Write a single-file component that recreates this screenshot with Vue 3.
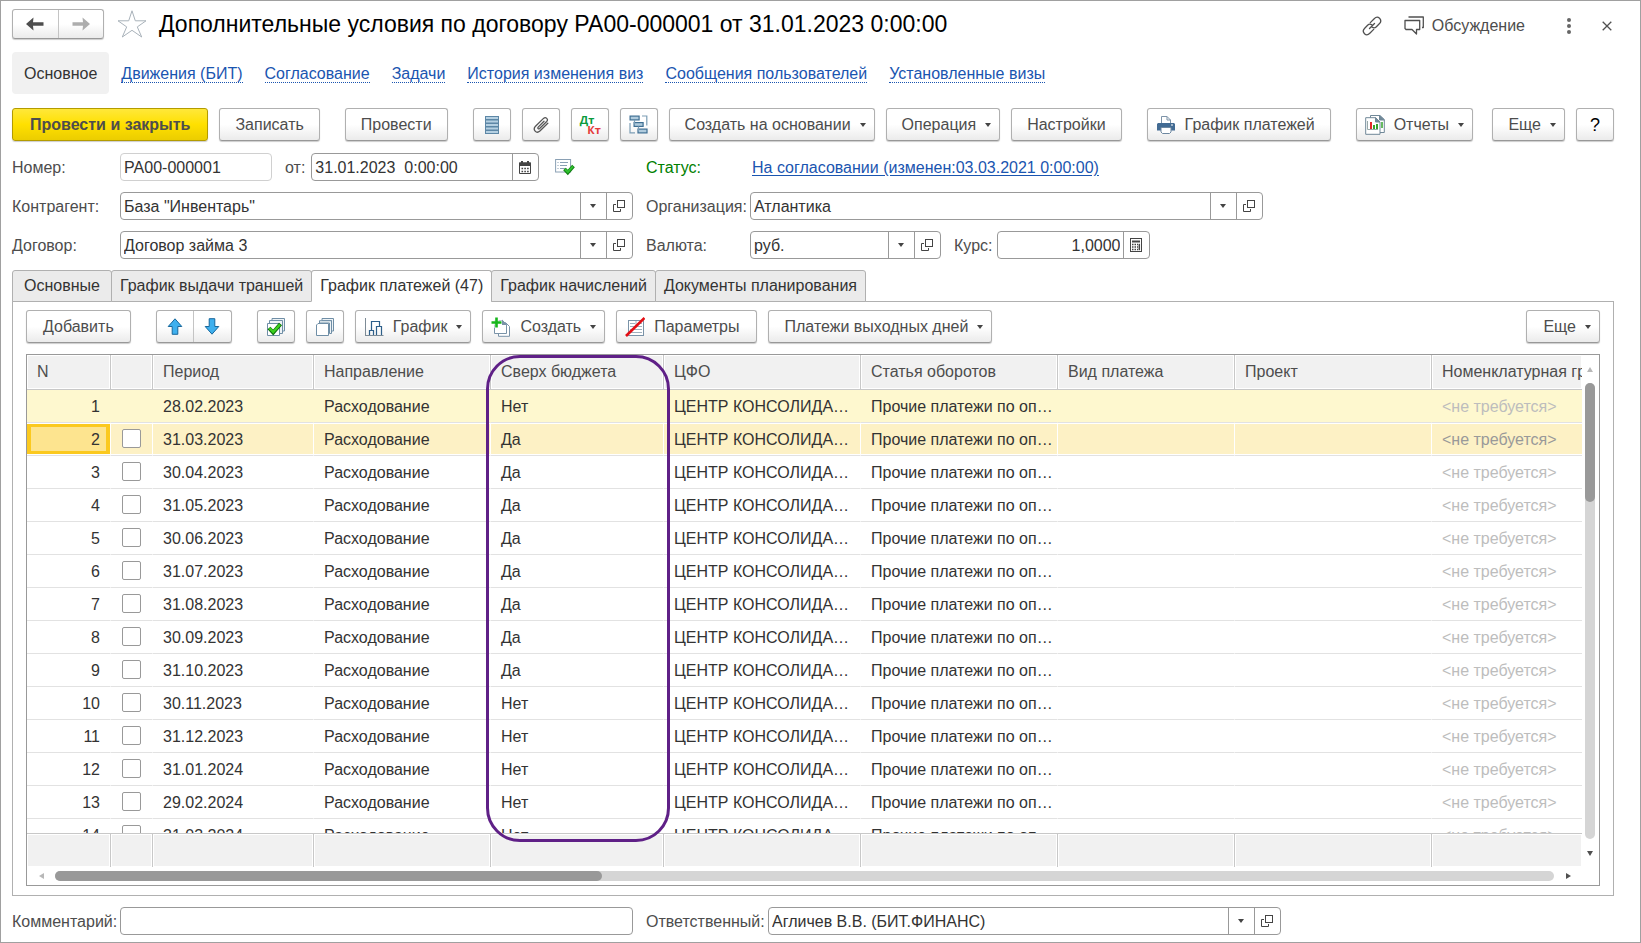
<script setup>
import { ref } from 'vue'

const links = ['Движения (БИТ)', 'Согласование', 'Задачи', 'История изменения виз', 'Сообщения пользователей', 'Установленные визы']
const tabs = ['Основные', 'График выдачи траншей', 'График платежей (47)', 'График начислений', 'Документы планирования']
const activeTab = ref(2)

const columns = [
  { key: 'n', title: 'N' },
  { key: 'mark', title: '' },
  { key: 'period', title: 'Период' },
  { key: 'direction', title: 'Направление' },
  { key: 'over', title: 'Сверх бюджета' },
  { key: 'cfo', title: 'ЦФО' },
  { key: 'article', title: 'Статья оборотов' },
  { key: 'kind', title: 'Вид платежа' },
  { key: 'project', title: 'Проект' },
  { key: 'group', title: 'Номенклатурная группа' },
]

const periods = [
  ['28.02.2023', 'Нет'], ['31.03.2023', 'Да'], ['30.04.2023', 'Да'], ['31.05.2023', 'Да'],
  ['30.06.2023', 'Да'], ['31.07.2023', 'Да'], ['31.08.2023', 'Да'], ['30.09.2023', 'Да'],
  ['31.10.2023', 'Да'], ['30.11.2023', 'Нет'], ['31.12.2023', 'Нет'], ['31.01.2024', 'Нет'],
  ['29.02.2024', 'Нет'], ['31.03.2024', 'Нет'],
]
const rows = periods.map(([period, over], i) => ({ n: i + 1, period, over }))

const number = ref('РА00-000001')
const date = ref('31.01.2023  0:00:00')
const partner = ref('База "Инвентарь"')
const contract = ref('Договор займа 3')
const organization = ref('Атлантика')
const currency = ref('руб.')
const rate = ref('1,0000')
const comment = ref('')
const responsible = ref('Агличев В.В. (БИТ.ФИНАНС)')
</script>

<template>
  <main class="window">
    <header class="title-row">
      <div class="pair history">
        <button type="button" aria-label="Назад">
          <svg width="18" height="14" viewBox="0 0 18 14"><path d="M0 7 7.500 .5 7 5.300H17.500V8.700H7L7.500 13.500Z" fill="#4d4d4d" /></svg>
        </button>
        <button type="button" aria-label="Вперед">
          <svg width="18" height="14" viewBox="0 0 18 14"><path d="M18 7 10.500 .5 11 5.300H.5V8.700H11L10.500 13.500Z" fill="#adadad" /></svg>
        </button>
      </div>
      <button type="button" class="plain star" aria-label="Избранное">
        <svg width="30" height="30" viewBox="0 0 30 30"><path d="M15 1.800 18.300 11.800H29L20.300 17.900 24.700 28 15 21.300 5.300 28 9.700 17.900 1 11.800H11.700Z" fill="#fff" stroke="#a9b2ba" stroke-width="1" /></svg>
      </button>
      <h1>Дополнительные условия по договору РА00-000001 от 31.01.2023 0:00:00</h1>
      <div class="window-tools">
        <button type="button" class="plain" aria-label="Ссылка">
          <svg width="20" height="20" viewBox="0 0 20 20" fill="none" stroke="#505050" stroke-width="1.300" stroke-linecap="round"><path d="M8.300 6.600 12.200 2.700C13.700 1.200 15.700 .5 17.500 2.300 19.400 4.200 18.800 6.300 17.300 7.800L14.400 10.700C13.300 11.800 11.500 12 10.200 11.200M11.700 13.400 7.800 17.300C6.300 18.800 4.300 19.500 2.500 17.700 .6 15.800 1.200 13.700 2.700 12.200L5.600 9.300C6.700 8.200 8.500 8 9.800 8.800M7.500 12.500 12.500 7.500" /></svg>
        </button>
        <button type="button" class="plain discuss">
          <svg width="20" height="20" viewBox="0 0 20 20" fill="none" stroke="#505050" stroke-width="1.300"><path d="M4.500 1H19.300V11.500H18M1 4.500H15.700V13.500H12.500V18L8 13.500H2L1 12.500Z" stroke-linejoin="round" /></svg>
          <span>Обсуждение</span>
        </button>
        <button type="button" class="plain dots" aria-label="Меню">
          <svg width="4" height="16" viewBox="0 0 4 16" fill="#666"><circle cx="2" cy="2" r="2" /><circle cx="2" cy="8" r="2" /><circle cx="2" cy="14" r="2" /></svg>
        </button>
        <button type="button" class="plain close" aria-label="Закрыть">
          <svg width="10" height="10" viewBox="0 0 10 10" stroke="#505050" stroke-width="1.300"><path d="M.7 .7 9.300 9.300M9.300 .7 .7 9.300" /></svg>
        </button>
      </div>
    </header>

    <nav class="sections">
      <span class="current">Основное</span>
      <a v-for="l in links" :key="l" href="#">{{ l }}</a>
    </nav>

    <div class="toolbar commands">
      <button type="button" class="btn primary">Провести и закрыть</button>
      <button type="button" class="btn">Записать</button>
      <button type="button" class="btn apart">Провести</button>
      <button type="button" class="btn square apart" aria-label="Регистр">
        <svg width="14" height="20" viewBox="0 0 14 20">
          <g fill="#b5d0e2" stroke="#5d87a6" stroke-width="1"><rect x=".5" y="1.500" width="13" height="3" /><rect x=".5" y="5" width="13" height="3" /><rect x=".5" y="8.500" width="13" height="3" /><rect x=".5" y="12" width="13" height="3" /><rect x=".5" y="15.500" width="13" height="3" /></g>
        </svg>
      </button>
      <button type="button" class="btn square" aria-label="Файлы">
        <svg width="18" height="18" viewBox="0 0 18 18" fill="none" stroke="#555" stroke-width="1.300" stroke-linecap="round"><path d="M12 5.300 6.200 11.100C5.200 12.300 6.500 13.500 7.600 12.500L14.700 5.500C16.700 3.300 13.800 .3 11.500 2.400L3.500 10.300C.3 13.600 4.300 18.200 7.900 15L15.800 7.200" /></svg>
      </button>
      <button type="button" class="btn square dtkt" aria-label="Движения Дт Кт"><span class="dt">Дт</span><span class="kt">Кт</span></button>
      <button type="button" class="btn square" aria-label="Структура">
        <svg width="19" height="19" viewBox="0 0 19 19">
          <g fill="#b0cbdd" stroke="#3f6f93" stroke-width="1.200"><rect x="1.100" y="1.100" width="9" height="3.800" /><rect x="5.100" y="7.600" width="9" height="3.800" /><rect x="9" y="14.100" width="9" height="3.800" /></g>
          <path d="M13 1H17.800V10.500M1 8V17.800H6M5.500 5V9.500M9.500 11.500V16" fill="none" stroke="#7c9db5" stroke-width="1.200" />
        </svg>
      </button>
      <button type="button" class="btn drop">Создать на основании<i class="caret"></i></button>
      <button type="button" class="btn drop">Операция<i class="caret"></i></button>
      <button type="button" class="btn">Настройки</button>
      <button type="button" class="btn apart with-icon">
        <svg width="20" height="20" viewBox="0 0 20 20">
          <path d="M5.500 8V1.500H11L14.500 5V8" fill="#fff" stroke="#7d93a8" /><path d="M11 1.500V5H14.500" fill="none" stroke="#7d93a8" />
          <path d="M2 8H18L19 9V15.500H1V9Z" fill="#426b93" /><rect x="15" y="9.500" width="2" height="1" fill="#fff" />
          <path d="M5 12.500H15V17L13.500 18.500H6.500L5 17Z" fill="#fff" stroke="#6e88a0" />
        </svg>
        <span>График платежей</span>
      </button>
      <button type="button" class="btn apart with-icon drop">
        <svg width="20" height="20" viewBox="0 0 20 20">
          <path d="M5.500 .5H15L19.300 4.500V17.500H5.500Z" fill="#fff" stroke="#708898" /><path d="M14.500 .5V5H19.300Z" fill="#708898" stroke="#708898" /><path d="M17 7V13" stroke="#35a52d" stroke-width="1.500" />
          <path d="M.7 2.700H10.500L15 7V19.300H.7Z" fill="#fff" stroke="#708898" /><path d="M10.500 2.700V7H15Z" fill="#708898" stroke="#708898" />
          <path d="M2.500 6V14.500H13" fill="none" stroke="#9aa" /><rect x="5" y="7" width="2" height="7" fill="#e32a2a" /><rect x="8" y="10" width="2" height="4" fill="#35a52d" /><rect x="11" y="9" width="2" height="5" fill="#35a52d" />
        </svg>
        <span>Отчеты</span><i class="caret"></i>
      </button>
      <button type="button" class="btn drop to-end">Еще<i class="caret"></i></button>
      <button type="button" class="btn square help">?</button>
    </div>

    <form class="form" @submit.prevent>
      <div class="row">
        <div class="left">
          <label class="lbl" for="number">Номер:</label>
          <div class="field muted number"><input id="number" v-model="number" type="text" readonly /></div>
          <label class="from" for="date">от:</label>
          <div class="field date">
            <input id="date" v-model="date" type="text" />
            <button type="button" aria-label="Календарь">
              <svg width="12" height="13" viewBox="0 0 12 13"><path d="M.5 2H11.500V12.500H.5Z" fill="#fff" stroke="#444" /><path d="M0 1.500H12V5H0Z" fill="#444" /><path d="M3 0V3M9 0V3" stroke="#444" stroke-width="2" /><path d="M2.500 7.500H10M2.500 10.500H10" stroke="#444" stroke-width="1.600" stroke-dasharray="1.600 1.200" /></svg>
            </button>
          </div>
          <svg class="posted" width="20" height="18" viewBox="0 0 20 18"><rect x=".6" y="1.500" width="15" height="12.500" fill="#fff" stroke="#8aa0b4" /><path d="M5 4.500H13M5 7.500H12M5 10.500H10M2.500 4.500H3.500M2.500 7.500H3.500M2.500 10.500H3.500" stroke="#8aa0b4" /><path d="M9.500 11 12.800 14.500 18.500 8" fill="none" stroke="#118011" stroke-width="3.600" /><path d="M10 11.200 12.800 14 18 8.300" fill="none" stroke="#2fc12f" stroke-width="2" /></svg>
        </div>
        <span class="lbl2 status">Статус:</span>
        <a class="state" href="#">На согласовании (изменен:03.03.2021 0:00:00)</a>
      </div>

      <div class="row">
        <div class="left">
          <label class="lbl" for="partner">Контрагент:</label>
          <div class="field wide">
            <input id="partner" v-model="partner" type="text" role="combobox" aria-expanded="false" />
            <button type="button" aria-label="Выбрать контрагента"><i class="caret"></i></button>
            <button type="button" aria-label="Открыть контрагента"><svg width="12" height="12" viewBox="0 0 12 12" fill="none" stroke="#444"><rect x="4.500" y=".5" width="7" height="7" /><path d="M3 4.500H.5V11.500H7.500V9" /></svg></button>
          </div>
        </div>
        <label class="lbl2" for="organization">Организация:</label>
        <div class="field wide">
          <input id="organization" v-model="organization" type="text" role="combobox" aria-expanded="false" />
          <button type="button" aria-label="Выбрать организацию"><i class="caret"></i></button>
          <button type="button" aria-label="Открыть организацию"><svg width="12" height="12" viewBox="0 0 12 12" fill="none" stroke="#444"><rect x="4.500" y=".5" width="7" height="7" /><path d="M3 4.500H.5V11.500H7.500V9" /></svg></button>
        </div>
      </div>

      <div class="row">
        <div class="left">
          <label class="lbl" for="contract">Договор:</label>
          <div class="field wide">
            <input id="contract" v-model="contract" type="text" role="combobox" aria-expanded="false" />
            <button type="button" aria-label="Выбрать договор"><i class="caret"></i></button>
            <button type="button" aria-label="Открыть договор"><svg width="12" height="12" viewBox="0 0 12 12" fill="none" stroke="#444"><rect x="4.500" y=".5" width="7" height="7" /><path d="M3 4.500H.5V11.500H7.500V9" /></svg></button>
          </div>
        </div>
        <label class="lbl2" for="currency">Валюта:</label>
        <div class="field currency">
          <input id="currency" v-model="currency" type="text" role="combobox" aria-expanded="false" />
          <button type="button" aria-label="Выбрать валюту"><i class="caret"></i></button>
          <button type="button" aria-label="Открыть валюту"><svg width="12" height="12" viewBox="0 0 12 12" fill="none" stroke="#444"><rect x="4.500" y=".5" width="7" height="7" /><path d="M3 4.500H.5V11.500H7.500V9" /></svg></button>
        </div>
        <label class="rate-label" for="rate">Курс:</label>
        <div class="field rate">
          <input id="rate" v-model="rate" type="text" />
          <button type="button" aria-label="Калькулятор">
            <svg width="12" height="14" viewBox="0 0 12 14"><rect x=".5" y=".5" width="11" height="13" fill="#fff" stroke="#444" /><path d="M2 3.500H10" stroke="#444" stroke-width="2" /><path d="M2 6.500H8M2 9H8M2 11.500H8" stroke="#444" stroke-width="1.500" stroke-dasharray="1.500 1" /><path d="M9.300 5.800V12.200" stroke="#444" stroke-width="1.500" /></svg>
          </button>
        </div>
      </div>
    </form>

    <div class="tabs" role="tablist">
      <button v-for="(t, i) in tabs" :key="t" type="button" role="tab" :aria-selected="i === activeTab" :class="{ active: i === activeTab }" @click="activeTab = i">{{ t }}</button>
    </div>

    <section class="panel">
      <div class="toolbar">
        <button type="button" class="btn">Добавить</button>
        <div class="pair move apart">
          <button type="button" aria-label="Вверх"><svg width="16" height="17" viewBox="0 0 16 17"><path d="M8 .8 14.800 8.500H10.800V16.300H5.200V8.500H1.200Z" fill="#3fb0ee" stroke="#17679c" /></svg></button>
          <button type="button" aria-label="Вниз"><svg width="16" height="17" viewBox="0 0 16 17"><path d="M8 16.200 14.800 8.500H10.800V.7H5.200V8.500H1.200Z" fill="#3fb0ee" stroke="#17679c" /></svg></button>
        </div>
        <button type="button" class="btn square apart" aria-label="Отметить все">
          <svg width="20" height="20" viewBox="0 0 20 20"><g fill="#eef3f6" stroke="#6f8ea6"><path d="M6 1.500H18.500V14H6Z" /><path d="M3.500 3.500H16.500V16.500H3.500Z" /><path d="M1.500 6.500H13.500V18.500H1.500Z" fill="#fff" /></g><path d="M3 11 7.200 15.500 14.500 7" fill="none" stroke="#0c6f0c" stroke-width="4" /><path d="M3.500 11.200 7.200 15 14 7.500" fill="none" stroke="#3dd01e" stroke-width="2.400" /></svg>
        </button>
        <button type="button" class="btn square" aria-label="Снять отметки">
          <svg width="20" height="20" viewBox="0 0 20 20"><g fill="#eef3f6" stroke="#6f8ea6"><path d="M7 1.500H18.500V14L16.500 14V3.500H7Z" /><path d="M4.500 3.700H16.500V16.500H14.500V6H4.500Z" /><path d="M3 6.500H13.500V18.500H1.500V8Z" fill="#fff" /></g></svg>
        </button>
        <button type="button" class="btn with-icon drop">
          <svg width="20" height="20" viewBox="0 0 20 20" fill="none"><path d="M1.500 1V18.500M1 18.500H19.500" stroke="#7d8b96" /><path d="M5.500 18V13.500H9.500V18M7.500 13.500V4.500H15.500V9.500M12.500 18V9.500H17.500V18" stroke="#2d5f8a" stroke-width="1.200" /></svg>
          <span>График</span><i class="caret"></i>
        </button>
        <button type="button" class="btn with-icon drop">
          <svg width="20" height="20" viewBox="0 0 20 20"><path d="M7.500 5.500H14.500L18.500 9.500V19.300H7.500Z" fill="#fff" stroke="#7a93a8" /><path d="M3.500 3.500H11.500L15.500 7.500V16.500H3.500Z" fill="#fff" stroke="#7a93a8" /><path d="M11 2.500V8H16Z" fill="#7a93a8" /><path d="M5.500 0V11M0 5.500H11" stroke="#fff" stroke-width="4" /><path d="M5.500 .5V10.500M.5 5.500H10.500" stroke="#17b51c" stroke-width="2.600" /></svg>
          <span>Создать</span><i class="caret"></i>
        </button>
        <button type="button" class="btn with-icon">
          <svg width="20" height="20" viewBox="0 0 20 20"><rect x="3.500" y="3.500" width="15" height="15" fill="#fff" stroke="#7a93a8" /><path d="M5 6.500H10M12 6.500H17M5 9.500H10M12 9.500H17M5 12.500H17M5 15.500H17M11 4V11" stroke="#9fb0bd" /><path d="M1 19 19.500 1" stroke="#e30e14" stroke-width="2.600" /></svg>
          <span>Параметры</span>
        </button>
        <button type="button" class="btn drop">Платежи выходных дней<i class="caret"></i></button>
        <button type="button" class="btn drop to-end">Еще<i class="caret"></i></button>
      </div>

      <div class="grid-frame">
        <div class="viewport">
          <div class="clip">
            <table>
              <colgroup><col v-for="c in columns" :key="c.key" :class="'c-' + c.key" /></colgroup>
              <thead>
                <tr><th v-for="c in columns" :key="c.key" scope="col">{{ c.title }}</th></tr>
              </thead>
              <tbody>
                <tr v-for="r in rows" :key="r.n" :class="{ first: r.n === 1, selected: r.n === 2 }">
                  <td class="num">{{ r.n }}</td>
                  <td class="mark"><input v-if="r.n > 1" type="checkbox" :aria-label="'Строка ' + r.n" /></td>
                  <td>{{ r.period }}</td>
                  <td>Расходование</td>
                  <td>{{ r.over }}</td>
                  <td>ЦЕНТР КОНСОЛИДА…</td>
                  <td>Прочие платежи по оп…</td>
                  <td></td>
                  <td></td>
                  <td class="none">&lt;не требуется&gt;</td>
                </tr>
              </tbody>
            </table>
          </div>
          <div class="totals"><span v-for="c in columns" :key="c.key" :class="'c-' + c.key"></span></div>
          <div class="highlight"></div>
        </div>
        <div class="scroll vertical">
          <button type="button" class="plain" aria-label="Прокрутить вверх"><svg width="6" height="5" viewBox="0 0 6 5"><path d="M3 0 6 5H0Z" fill="#b8b8b8" /></svg></button>
          <div class="track"><div class="thumb"></div></div>
          <button type="button" class="plain" aria-label="Прокрутить вниз"><svg width="6" height="5" viewBox="0 0 6 5"><path d="M3 5 6 0H0Z" fill="#505050" /></svg></button>
        </div>
        <div class="scroll horizontal">
          <button type="button" class="plain" aria-label="Прокрутить влево"><svg width="5" height="6" viewBox="0 0 5 6"><path d="M0 3 5 0V6Z" fill="#b8b8b8" /></svg></button>
          <div class="track"><div class="thumb"></div></div>
          <button type="button" class="plain" aria-label="Прокрутить вправо"><svg width="5" height="6" viewBox="0 0 5 6"><path d="M5 3 0 0V6Z" fill="#505050" /></svg></button>
        </div>
      </div>
    </section>

    <footer class="row bottom">
      <div class="left">
        <label class="lbl" for="comment">Комментарий:</label>
        <div class="field wide"><input id="comment" v-model="comment" type="text" /></div>
      </div>
      <label class="lbl2 long" for="responsible">Ответственный:</label>
      <div class="field wide">
        <input id="responsible" v-model="responsible" type="text" role="combobox" aria-expanded="false" />
        <button type="button" aria-label="Выбрать ответственного"><i class="caret"></i></button>
        <button type="button" aria-label="Открыть ответственного"><svg width="12" height="12" viewBox="0 0 12 12" fill="none" stroke="#444"><rect x="4.500" y=".5" width="7" height="7" /><path d="M3 4.500H.5V11.500H7.500V9" /></svg></button>
      </div>
    </footer>
  </main>
</template>

<style>
body {
  margin: 0;
  background: #fff;
}
</style>

<style scoped>
* {
  box-sizing: border-box;
}
.window {
  display: flex;
  flex-direction: column;
  height: 100vh;
  min-height: 600px;
  padding: 8px 26px 7px 11px;
  border: 1px solid #a0a0a0;
  background: #fff;
  color: #333;
  font: 16px/20px "Liberation Sans", Arial, sans-serif;
  overflow: hidden;
}
button,
input {
  font: inherit;
  color: inherit;
}
button {
  padding: 0;
  white-space: nowrap;
}
svg {
  display: block;
  flex: none;
}
a {
  color: #1a55b0;
}
.plain {
  display: flex;
  align-items: center;
  justify-content: center;
  border: 0;
  background: none;
  color: #4d4d4d;
}

.title-row {
  display: flex;
  align-items: center;
  height: 30px;
}
.pair {
  display: flex;
  border: 1px solid #b0b0b0;
  border-bottom-color: #989898;
  border-radius: 3px;
  background: linear-gradient(#fff 50%, #ebebeb);
  box-shadow: 0 1px 1px #ccc;
}
.pair button {
  display: flex;
  align-items: center;
  justify-content: center;
  border: 0;
  background: none;
}
.pair button + button {
  border-left: 1px solid #c4c4c4;
}
.history {
  width: 92px;
  height: 30px;
}
.history button {
  flex: 1;
}
.star {
  margin: 0 12px 0 13px;
}
h1 {
  margin: 0;
  font-size: 23px;
  line-height: 28px;
  font-weight: 400;
  color: #000;
  white-space: nowrap;
}
.window-tools {
  display: flex;
  align-items: center;
  margin-left: auto;
  padding: 3px 2px 0 0;
}
.discuss {
  gap: 8px;
  margin-left: 22px;
}
.dots {
  margin-left: 42px;
}
.close {
  margin-left: 31px;
}

.sections {
  display: flex;
  align-items: center;
  gap: 22px;
  margin-top: 13px;
}
.sections .current {
  margin-right: -10px;
  padding: 12px 12px 10px;
  border-radius: 4px;
  background: #f1f1f1;
}
.sections a {
  padding-top: 2px;
  line-height: 16px;
  border-bottom: 1px dotted #1a55b0;
  text-decoration: none;
  white-space: nowrap;
}

.toolbar {
  display: flex;
  gap: 11px;
  height: 33px;
}
.btn {
  display: flex;
  align-items: center;
  justify-content: center;
  padding: 0 16px;
  border: 1px solid #b0b0b0;
  border-bottom-color: #989898;
  border-radius: 3px;
  background: linear-gradient(#fff 50%, #ebebeb);
  box-shadow: 0 1px 1px #ccc;
  color: #4d4d4d;
}
.commands {
  margin-top: 14px;
}
.commands .btn {
  padding: 0 15px;
}
.commands .primary {
  padding: 0 17px;
  border-color: #b39b00;
  background: linear-gradient(#ffe83a, #ffe000 50%, #ebcd00);
  font-weight: 700;
}
.toolbar .square {
  flex: none;
  width: 38px;
  padding: 0;
}
.toolbar .drop {
  gap: 9px;
  padding-right: 8px;
}
.toolbar .with-icon {
  gap: 9px;
  padding-left: 8px;
}
.btn.help {
  color: #000;
  font-size: 18px;
}
.apart {
  margin-left: 14px;
}
.to-end {
  margin-left: auto;
}
.caret {
  width: 0;
  height: 0;
  border: 3px solid transparent;
  border-top: 4px solid #444;
  border-bottom: 0;
}
.btn.dtkt {
  flex-direction: column;
  font: 700 11px/10px "Open Sans", "Liberation Sans", sans-serif;
}
.dt {
  margin-right: 5px;
  color: #0a9a3c;
}
.kt {
  margin-left: 9px;
  color: #e53b3b;
}

.form {
  display: flex;
  flex-direction: column;
  gap: 11px;
  margin-top: 12px;
}
.row {
  display: flex;
  align-items: center;
  height: 28px;
}
.row label,
.lbl2 {
  padding-top: 2px;
  color: #4d4d4d;
  white-space: nowrap;
}
.left {
  display: flex;
  align-items: center;
  flex: 0 0 621px;
  margin-right: 13px;
}
.lbl {
  flex: 0 0 108px;
}
.lbl2 {
  flex: 0 0 104px;
}
.lbl2.long {
  flex-basis: 122px;
}
.row .status {
  color: #008000;
}
.state {
  margin-left: 2px;
  padding-top: 2px;
  text-underline-offset: 2px;
}
.from {
  margin: 0 6px 0 13px;
}
.field {
  display: flex;
  height: 28px;
  border: 1px solid #999;
  border-radius: 4px;
  background: #fff;
}
.field.muted {
  border-color: #d0d0d0;
}
.field input {
  flex: 1;
  min-width: 0;
  padding: 2px 3px 0;
  border: 0;
  outline: 0;
  background: none;
}
.field button {
  display: flex;
  align-items: center;
  justify-content: center;
  flex: 0 0 26px;
  padding-right: 1px;
  border: 0;
  border-left: 1px solid #999;
  background: none;
}
.wide {
  width: 513px;
}
.number {
  width: 152px;
}
.date {
  width: 228px;
}
.posted {
  margin-left: 16px;
}
.currency {
  width: 191px;
}
.rate-label {
  margin: 0 5px 0 13px;
}
.rate {
  width: 153px;
}
.rate input {
  text-align: right;
}

.tabs {
  display: flex;
  flex: none;
  margin-top: 11px;
}
.tabs button {
  position: relative;
  height: 32px;
  margin-bottom: -1px;
  padding: 0 8px;
  border: 1px solid #b0b0b0;
  border-radius: 3px 3px 0 0;
  background: #ebebeb;
}
.tabs button:first-child {
  padding: 0 11px;
}
.tabs button + button {
  margin-left: -1px;
}
.tabs .active {
  border-bottom-color: #fff;
  background: #fff;
}
.panel {
  display: flex;
  flex-direction: column;
  flex: 1;
  min-height: 0;
  padding: 8px 13px 9px;
  border: 1px solid #b0b0b0;
}
.move {
  width: 76px;
}
.move button {
  flex: 1;
}

.grid-frame {
  display: grid;
  grid-template: minmax(0, 1fr) 18px / minmax(0, 1fr) 17px;
  flex: 1;
  min-height: 0;
  margin-top: 11px;
  border: 1px solid #999;
}
.viewport {
  position: relative;
  display: flex;
  flex-direction: column;
  min-height: 0;
}
.clip {
  flex: 1;
  min-height: 0;
  overflow: hidden;
}
table {
  width: 100%;
  table-layout: fixed;
  border-collapse: separate;
  border-spacing: 0;
}
.c-n { width: 84px; }
.c-mark { width: 42px; }
.c-period { width: 161px; }
.c-direction { width: 177px; }
.c-over { width: 173px; }
.c-cfo { width: 197px; }
.c-article { width: 197px; }
.c-kind { width: 177px; }
.c-project { width: 197px; }
th,
td {
  padding: 0 10px;
  text-align: left;
  white-space: nowrap;
  overflow: hidden;
}
th {
  height: 35px;
  border-right: 1px solid #c8c8c8;
  border-bottom: 1px solid #c8c8c8;
  background: #f1f1f1;
  box-shadow: inset 0 0 0 1px #fff;
  color: #4d4d4d;
  font-weight: 400;
}
td {
  height: 33px;
  padding-top: 2px;
  border-right: 1px solid transparent;
  border-bottom: 1px solid #e2e2e2;
}
th:last-child,
td:last-child {
  padding-right: 0;
  border-right: 0;
}
.num {
  text-align: right;
}
.none {
  color: #bdbdbd;
}
.first td {
  background: #fef8cf;
}
.selected td {
  border-right-color: #fff;
  background: #fdf1c5;
  box-shadow: inset 0 1px #fff, inset 0 -1px #fff;
}
.selected .num {
  background: #fde48f;
  box-shadow: inset 0 1px #fff, inset 0 -1px #fff, inset 0 0 0 4px #fbc91f;
}
.selected .none {
  color: #999;
}
.mark {
  padding-top: 0;
}
.mark input {
  display: block;
  appearance: none;
  width: 19px;
  height: 19px;
  margin: 0 0 1px 1px;
  border: 1px solid #999;
  border-radius: 2px;
  background: #fff;
}
.totals {
  display: flex;
  flex: 0 0 34px;
  border-top: 1px solid #c8c8c8;
}
.totals span {
  flex: none;
  border-right: 1px solid #c8c8c8;
  background: #f1f1f1;
  box-shadow: inset 0 0 0 1px #fff;
}
.totals span:last-child {
  flex: 1;
  border-right: 0;
}
/* Marks the «Сверх бюджета» column on top of the table */
.highlight {
  position: absolute;
  top: 0;
  bottom: 25px;
  left: 459px;
  width: 184px;
  border: 3px solid #5f2087;
  border-radius: 34px;
  pointer-events: none;
}

.scroll {
  display: flex;
  align-items: center;
}
.scroll button {
  flex: 0 0 28px;
}
.track {
  flex: 1;
  border-radius: 5px;
  background: #d5d5d5;
}
.thumb {
  border-radius: 5px;
  background: #999;
}
.vertical {
  flex-direction: column;
  padding-right: 1px;
}
.vertical .track {
  display: flex;
  flex-direction: column;
  width: 10px;
}
.vertical .thumb {
  height: 26%;
}
.horizontal .track {
  height: 10px;
}
.horizontal .thumb {
  width: 36.5%;
  height: 100%;
}
.bottom {
  flex: none;
  margin-top: 11px;
}
</style>
